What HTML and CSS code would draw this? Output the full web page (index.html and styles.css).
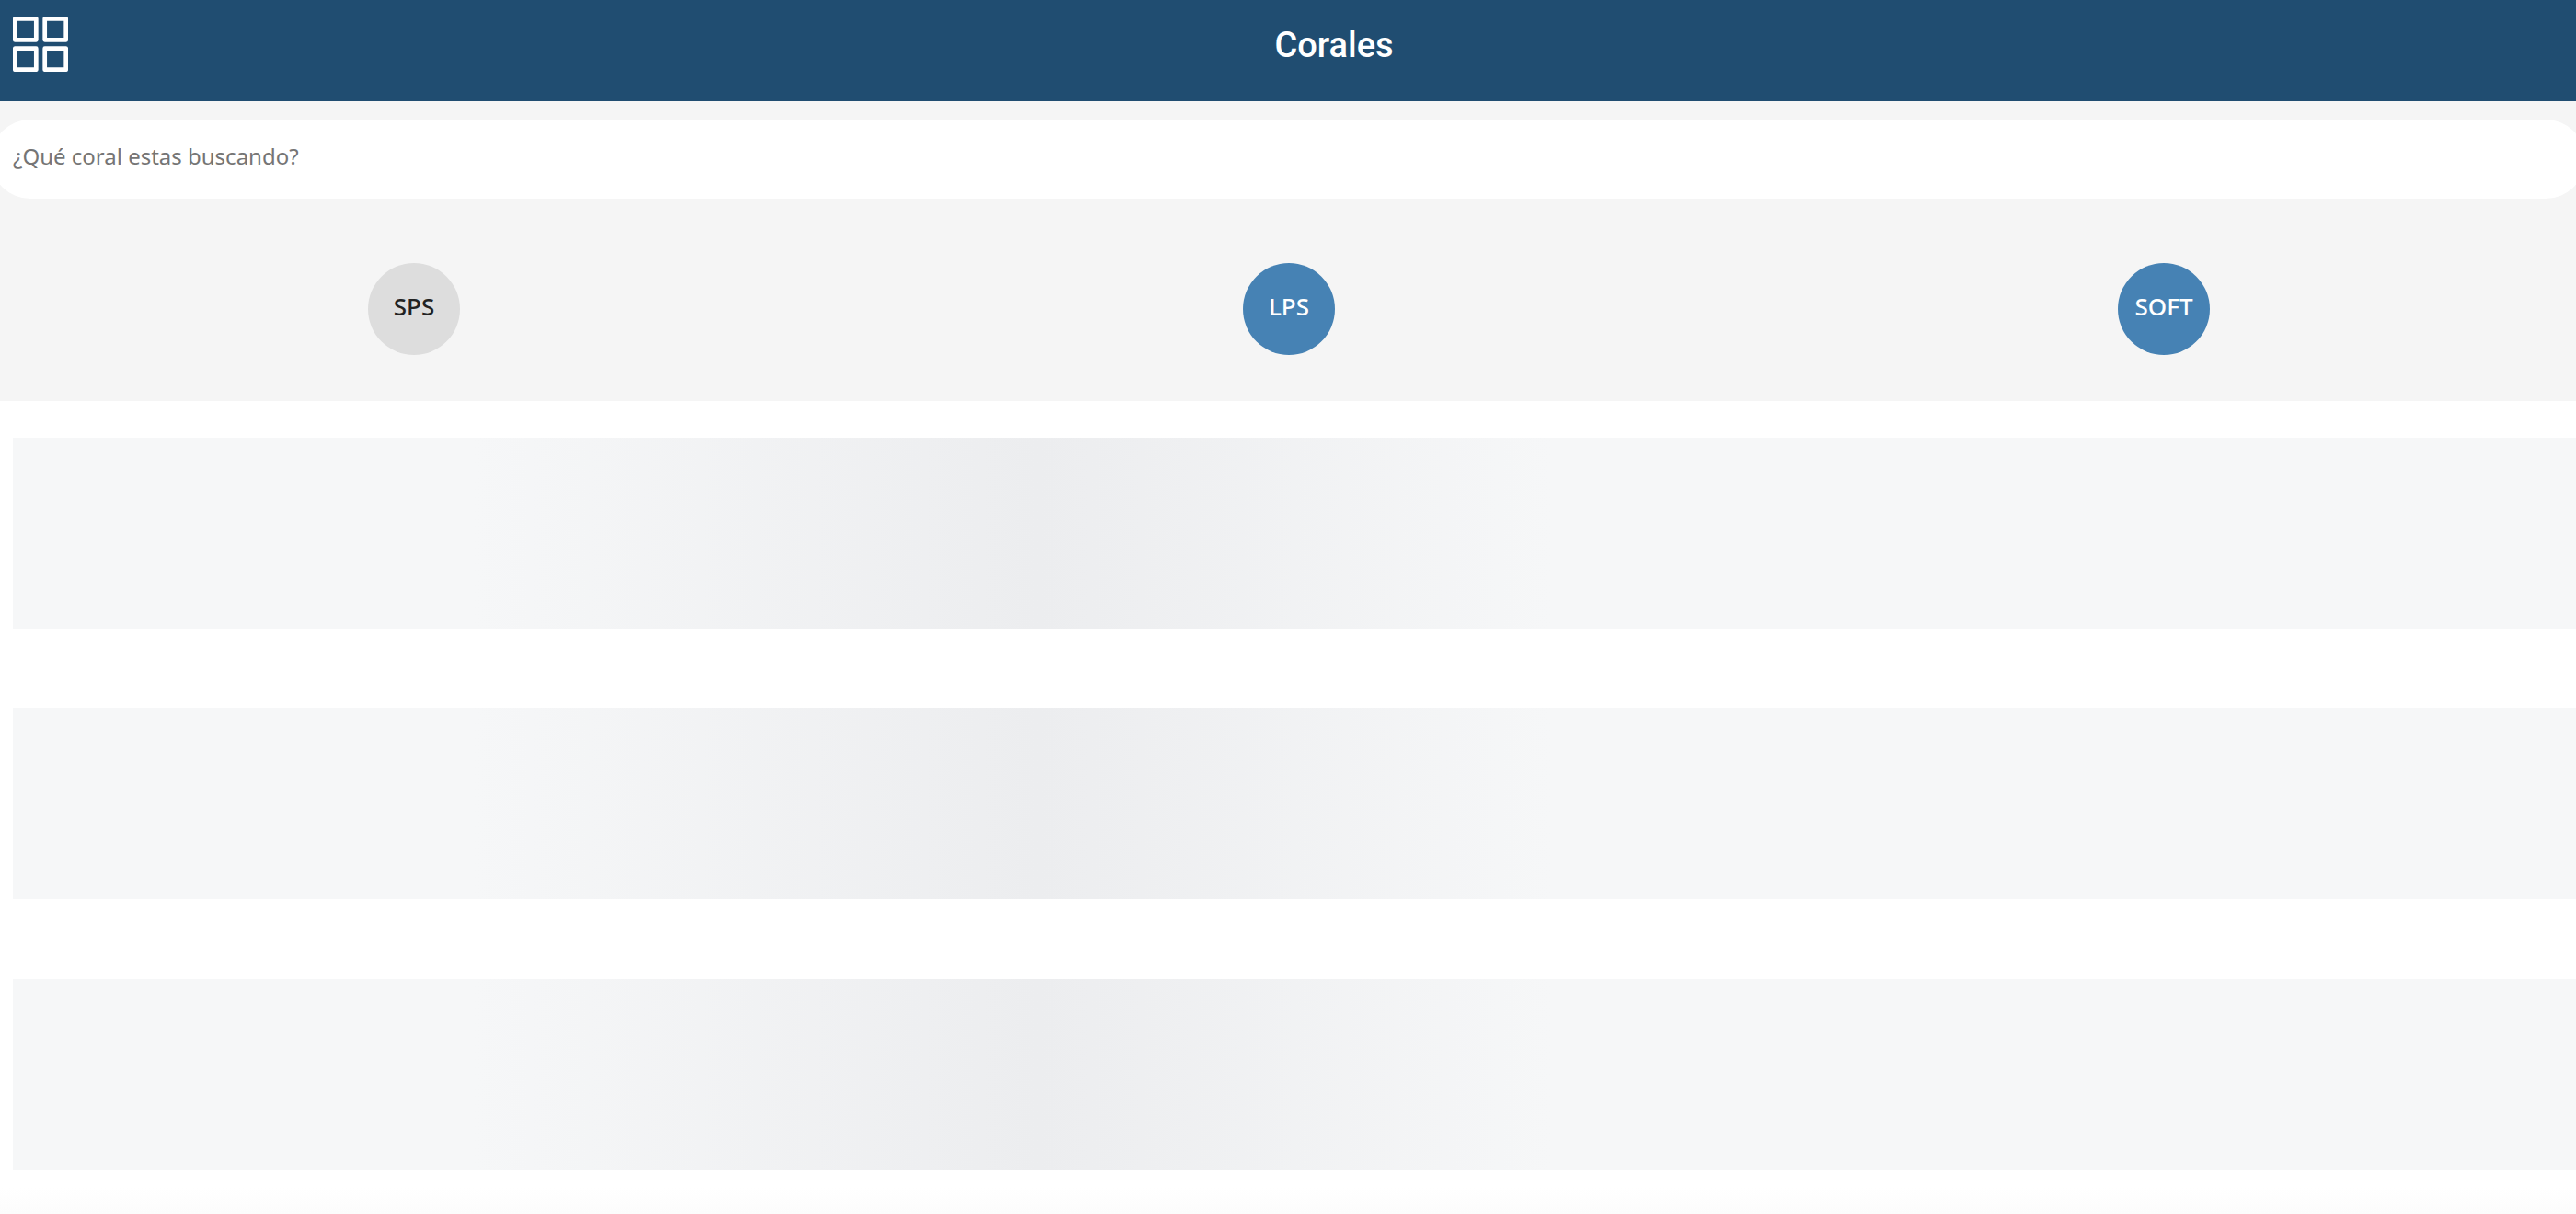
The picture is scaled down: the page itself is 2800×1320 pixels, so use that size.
FILE: index.html
```html
<!DOCTYPE html>
<html lang="es">
<head>
<meta charset="utf-8">
<meta name="viewport" content="width=device-width, initial-scale=1">
<title>Corales</title>
<link rel="stylesheet" href="styles.css">
</head>
<body>
<header class="topbar">
  <button class="menu" type="button" aria-label="Menú">
    <svg class="menu-icon" viewBox="0 0 60 60" fill="none" stroke="#fff" stroke-width="4.7" stroke-linejoin="round" aria-hidden="true">
      <rect x="2.3" y="2.3" width="23" height="23"/>
      <rect x="34.7" y="2.3" width="23" height="23"/>
      <rect x="2.3" y="34.7" width="23" height="23"/>
      <rect x="34.7" y="34.7" width="23" height="23"/>
    </svg>
  </button>
  <h1 class="title">Corales</h1>
</header>
<section class="finder">
  <input class="search" type="search" placeholder="¿Qué coral estas buscando?" aria-label="¿Qué coral estas buscando?">
  <div class="filters">
    <button class="filter filter-active" type="button" aria-pressed="true">SPS</button>
    <button class="filter" type="button" aria-pressed="false">LPS</button>
    <button class="filter" type="button" aria-pressed="false">SOFT</button>
  </div>
</section>
<main class="list" aria-busy="true">
  <div class="skeleton"></div>
  <div class="skeleton"></div>
  <div class="skeleton"></div>
</main>
<div class="bottom-shade"></div>
</body>
</html>
```
FILE: styles.css
```css
* {
  box-sizing: border-box;
}

body {
  margin: 0;
  min-height: 100vh;
  display: flex;
  flex-direction: column;
  overflow-x: clip;
  background: #fff;
  font-family: "Noto Sans", sans-serif;
}

.topbar {
  display: grid;
  grid-template-columns: 86px 1fr;
  align-items: start;
  height: 110px;
  padding: 18px 0 18px 14px;
  background: #204d71;
}

.menu {
  justify-self: start;
  padding: 0;
  border: 0;
  background: none;
}

.menu-icon {
  display: block;
  width: 60px;
  height: 60px;
}

.title {
  margin: 0;
  color: #fff;
  font: 500 38px/62px Roboto, sans-serif;
  text-align: center;
}

.finder {
  padding: 20px 0 50px;
  background: #f5f5f5;
}

.search {
  display: block;
  width: calc(100% + 20px);
  height: 86px;
  margin: 0 -10px 70px;
  padding: 0 24px 8px;
  border: 0;
  border-radius: 43px;
  background: #fff;
  font: 400 24px/36px "Noto Sans", sans-serif;
  appearance: none;
}

.search::placeholder {
  color: #757575;
}

.filters {
  display: flex;
  justify-content: space-between;
  padding: 0 calc(100% / 7 - 2px) 0 calc(100% / 7);
}

.filter {
  width: 100px;
  height: 100px;
  padding: 0 0 6px;
  border: 0;
  border-radius: 50%;
  background: #4682b4;
  color: #fff;
  font: 500 26px/36px "Noto Sans", sans-serif;
}

.filter-active {
  background: #ddd;
  color: #222;
}

.list {
  display: grid;
  gap: 86px;
  padding: 40px 0 0 14px;
}

.skeleton {
  height: 208px;
  background: linear-gradient(to right, #f6f7f8 18%, #ecedef 40%, #f6f7f8 60%);
}

.bottom-shade {
  flex: 1;
  background: linear-gradient(#fff 40%, #fcfcfc);
}
```
